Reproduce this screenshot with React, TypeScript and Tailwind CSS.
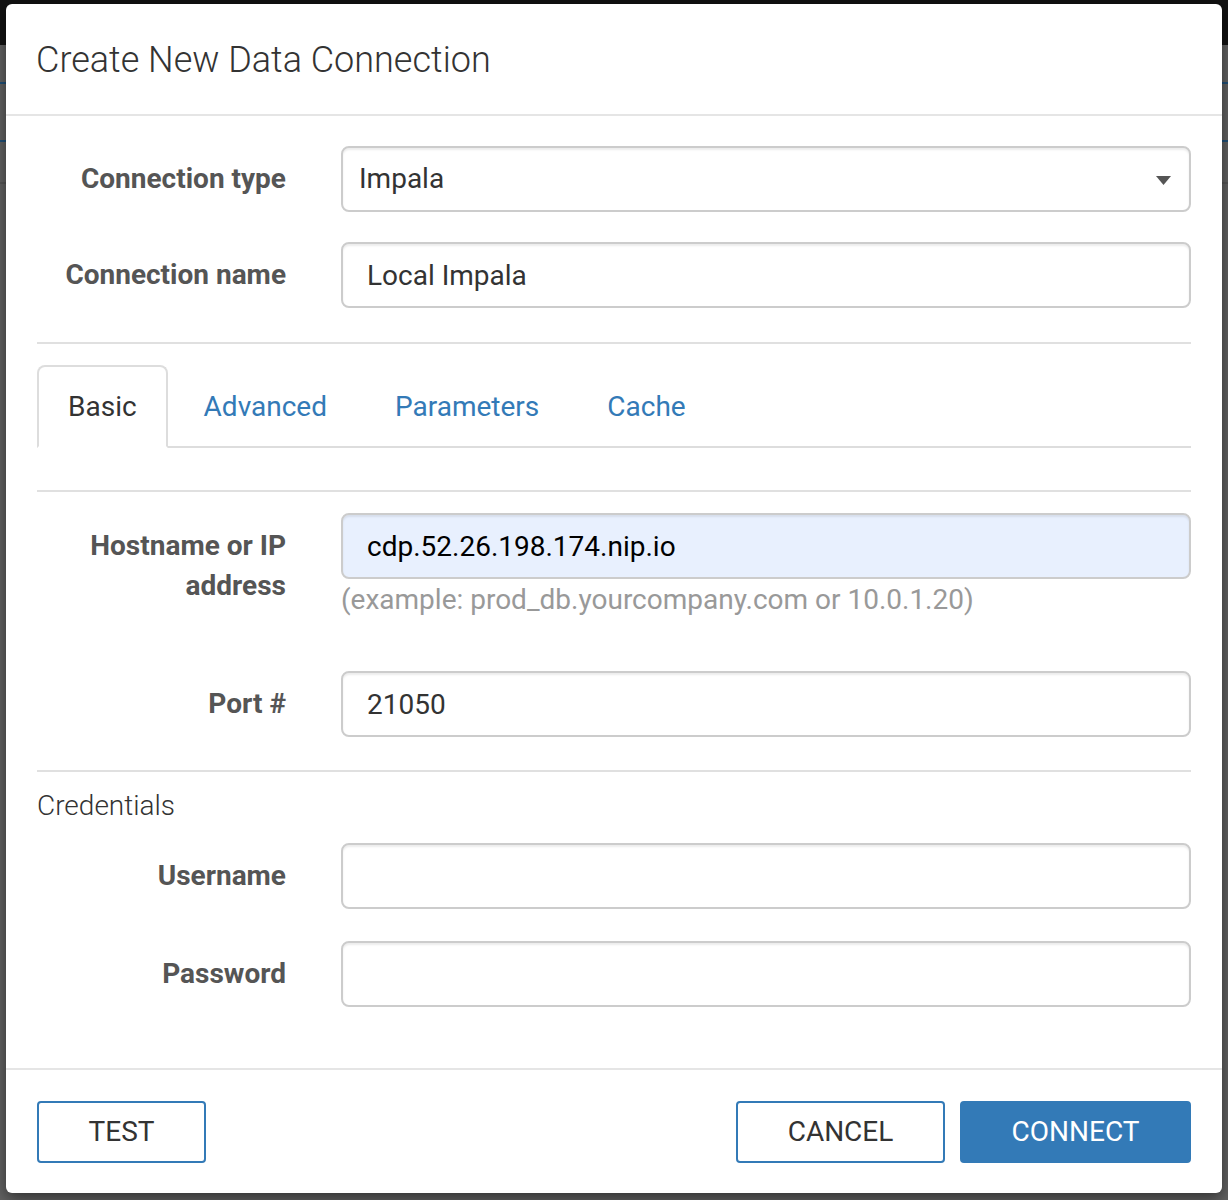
import React from "react";

function Label({ children }: { children: React.ReactNode }) {
  return (
    <div className="w-[249px] shrink-0 pt-[13px] text-right text-[28px] font-bold leading-[40px] text-[#555]">
      {children}
    </div>
  );
}

function TextInput({ value, autofill }: { value?: string; autofill?: boolean }) {
  return (
    <input
      readOnly
      value={value ?? ""}
      className={
        "h-[66px] w-full rounded-[8px] border-2 border-[#ccc] px-[24px] text-[28px] outline-none shadow-[inset_0_2px_2px_rgba(0,0,0,0.075)] " +
        (autofill ? "bg-[#e8f0fe] text-[#000]" : "bg-white text-[#333]")
      }
    />
  );
}

export default function App() {
  return (
    <div className="relative h-[1200px] w-[1228px] overflow-hidden bg-[#626262] font-['Roboto',sans-serif]">
      {/* dimmed background app */}
      <div className="h-[45px] w-full bg-[#121212]" />
      <div className="h-[37px]" />
      <div className="h-[2px] w-full bg-[#1f4f78]" />
      <div className="h-[56px]" />
      <div className="h-[2px] w-full bg-[#1f4f78]" />
      <div className="h-[40px]" />
      <div className="h-[2px] w-full bg-[#555]" />

      {/* modal */}
      <div className="absolute left-[6px] top-[4px] flex h-[1189px] w-[1216px] flex-col rounded-[6px] bg-white shadow-[0_5px_15px_rgba(0,0,0,0.5)]">
        {/* header */}
        <div className="flex h-[112px] shrink-0 items-center border-b-2 border-[#e5e5e5] pl-[30px] pr-[31px]">
          <h1 className="mt-[2px] text-[36px] font-light leading-[40px] text-[#333]">Create New Data Connection</h1>
        </div>

        {/* body */}
        <div className="flex flex-1 flex-col px-[31px] pt-[30px]">
          <div className="flex items-start gap-[55px]">
            <Label>Connection type</Label>
            <div className="flex h-[66px] flex-1 items-center justify-between rounded-[8px] border-2 border-[#ccc] pl-[16px] pr-[18px] text-[28px] text-[#333] shadow-[inset_0_2px_2px_rgba(0,0,0,0.075)]">
              <span>Impala</span>
              <svg width="15" height="9" viewBox="0 0 15 9" className="mt-[2px]">
                <polygon points="0,0 15,0 7.5,9" fill="#555" />
              </svg>
            </div>
          </div>

          <div className="mt-[30px] flex items-start gap-[55px]">
            <Label>Connection name</Label>
            <div className="flex-1">
              <TextInput value="Local Impala" />
            </div>
          </div>

          <div className="mt-[34px] h-[2px] w-full bg-[#e0e0e0]" />

          {/* tabs */}
          <div className="mt-[21px] flex border-b-2 border-[#ddd]">
            <div className="-mb-[2px] mr-[4px] flex h-[83px] items-center rounded-t-[8px] border-2 border-[#ddd] border-b-white bg-white px-[29px] text-[28px] text-[#333]">
              Basic
            </div>
            <div className="-mb-[2px] mr-[4px] flex h-[83px] items-center border-2 border-transparent px-[30px] text-[28px] text-[#337ab7]">
              Advanced
            </div>
            <div className="-mb-[2px] mr-[4px] flex h-[83px] items-center border-2 border-transparent px-[30px] text-[28px] text-[#337ab7]">
              Parameters
            </div>
            <div className="-mb-[2px] mr-[4px] flex h-[83px] items-center border-2 border-transparent px-[30px] text-[28px] text-[#337ab7]">
              Cache
            </div>
          </div>

          <div className="mt-[42px] h-[2px] w-full bg-[#e0e0e0]" />

          <div className="mt-[21px] flex items-start gap-[55px]">
            <Label>
              Hostname or IP
              <br />
              address
            </Label>
            <div className="flex-1">
              <TextInput value="cdp.52.26.198.174.nip.io" autofill />
              <div className="mt-[1px] text-[28px] leading-[40px] text-[#999]">
                (example: prod_db.yourcompany.com or 10.0.1.20)
              </div>
            </div>
          </div>

          <div className="mt-[51px] flex items-start gap-[55px]">
            <Label>Port #</Label>
            <div className="flex-1">
              <TextInput value="21050" />
            </div>
          </div>

          <div className="mt-[33px] h-[2px] w-full bg-[#e0e0e0]" />

          <div className="mt-[14px] text-[28px] font-light leading-[40px] text-[#333]">Credentials</div>

          <div className="mt-[17px] flex items-start gap-[55px]">
            <Label>Username</Label>
            <div className="flex-1">
              <TextInput />
            </div>
          </div>

          <div className="mt-[32px] flex items-start gap-[55px]">
            <Label>Password</Label>
            <div className="flex-1">
              <TextInput />
            </div>
          </div>
        </div>

        {/* footer */}
        <div className="flex shrink-0 items-center border-t-2 border-[#e5e5e5] px-[31px] pb-[30px] pt-[31px]">
          <button className="flex h-[62px] w-[169px] items-center justify-center rounded-[4px] border-2 border-[#337ab7] bg-white text-[28px] text-[#333]">
            TEST
          </button>
          <div className="flex-1" />
          <button className="flex h-[62px] w-[209px] items-center justify-center rounded-[4px] border-2 border-[#337ab7] bg-white text-[28px] text-[#333]">
            CANCEL
          </button>
          <button className="ml-[15px] flex h-[62px] w-[231px] items-center justify-center rounded-[4px] border-2 border-[#337ab7] bg-[#337ab7] text-[28px] text-white">
            CONNECT
          </button>
        </div>
      </div>
    </div>
  );
}
